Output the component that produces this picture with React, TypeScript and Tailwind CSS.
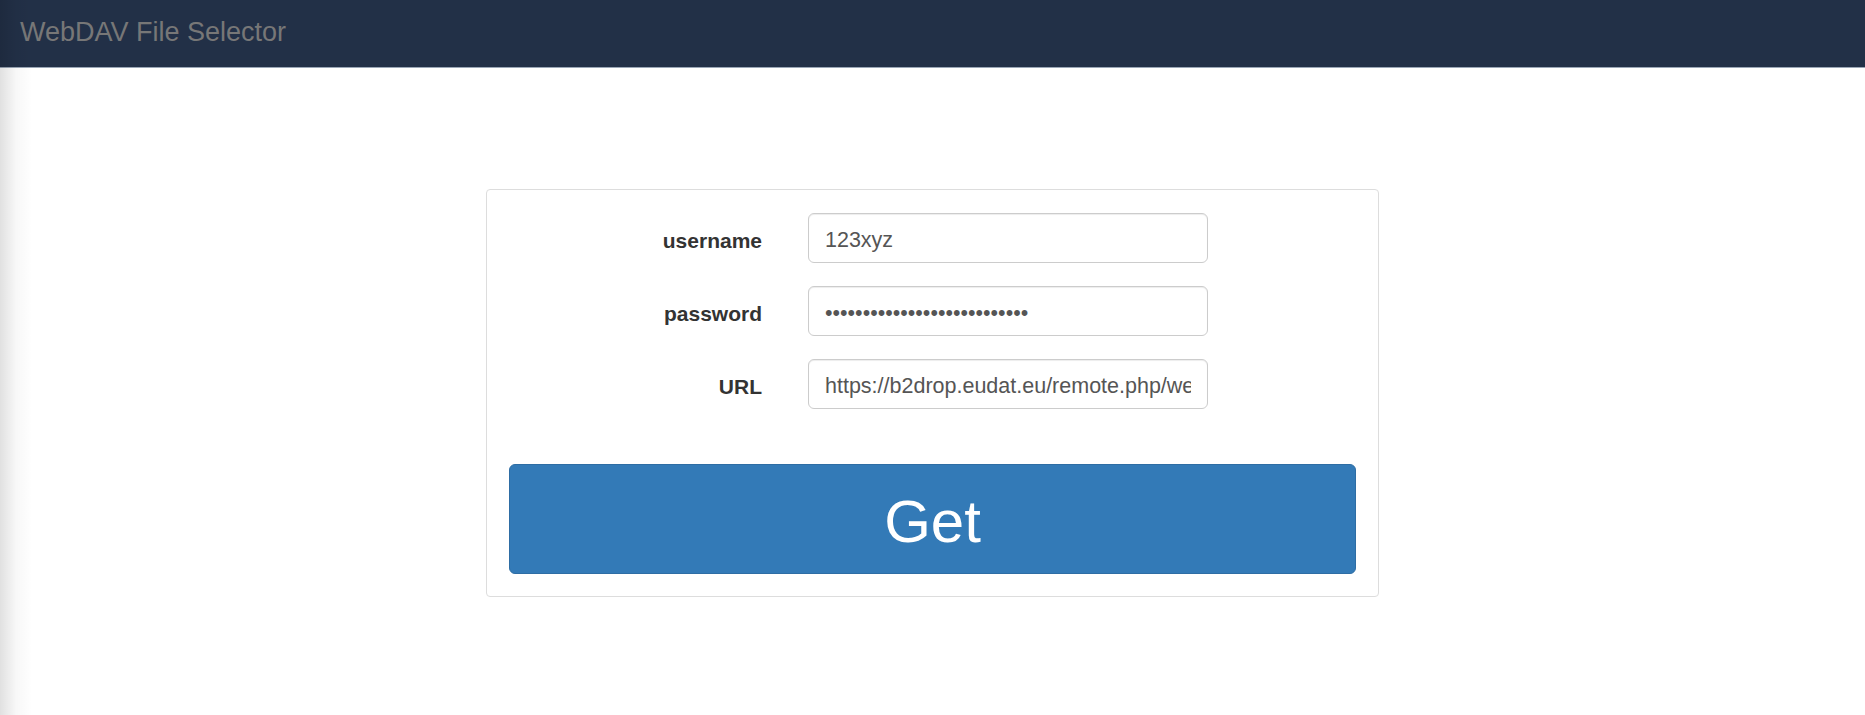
import { useState } from 'react';

const fields = [
  { id: 'username', label: 'username', type: 'text', value: '123xyz' },
  { id: 'password', label: 'password', type: 'password', value: 'abcdefghijklmnopqrstuvwxyz1' },
  { id: 'url', label: 'URL', type: 'text', value: 'https://b2drop.eudat.eu/remote.php/webdav/' },
];

export default function App() {
  const [values, setValues] = useState<Record<string, string>>(
    Object.fromEntries(fields.map((f) => [f.id, f.value]))
  );

  return (
    <div className="relative min-h-screen bg-white font-['Liberation_Sans',Arial,sans-serif]">
      {/* left edge shade */}
      <div className="pointer-events-none absolute inset-y-0 left-0 w-[32px] bg-gradient-to-r from-black/[0.12] via-black/[0.03] to-transparent" />

      {/* Navbar */}
      <nav className="h-[68px] bg-[#223047] border-b border-[#9aa6b6] flex items-center px-5">
        <span className="text-[27px] leading-none text-[#777777] pb-[2px]">WebDAV File Selector</span>
      </nav>

      {/* Form card */}
      <div className="flex justify-center pt-[121px]">
        <div className="w-[893px] bg-white border border-[#dddddd] rounded-[4px] px-[22px] pt-[23px] pb-[22px]">
          <div className="flex flex-col gap-[23px]">
            {fields.map((f) => (
              <div key={f.id} className="flex items-center">
                <label
                  htmlFor={f.id}
                  className="w-[253px] text-right text-[21px] font-bold text-[#333333] pt-[5px]"
                >
                  {f.label}
                </label>
                <input
                  id={f.id}
                  type={f.type}
                  value={values[f.id]}
                  onChange={(e) => setValues({ ...values, [f.id]: e.target.value })}
                  className="ml-[46px] w-[400px] h-[50px] box-border px-4 pt-[5px] pb-0 text-[21.5px] text-[#555555] bg-white border border-[#cccccc] rounded-[6px] shadow-[inset_0_1px_1px_rgba(0,0,0,0.075)] outline-none"
                />
              </div>
            ))}
          </div>

          <button className="mt-[55px] w-full h-[110px] bg-[#337ab7] border border-[#2e6da4] rounded-[6px] text-white text-[60px] leading-none pt-[6px]">
            Get
          </button>
        </div>
      </div>
    </div>
  );
}
